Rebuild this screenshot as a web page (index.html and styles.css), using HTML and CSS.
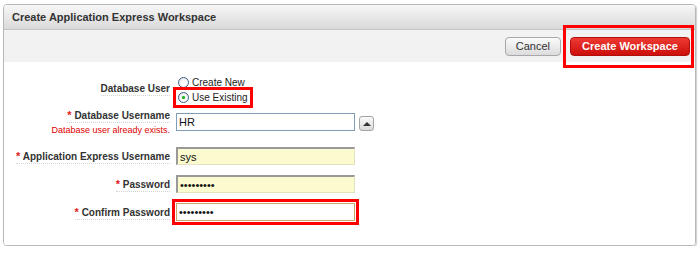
FILE: index.html
```html
<!DOCTYPE html>
<html>
<head>
<meta name="viewport" content="width=device-width, initial-scale=1.0">
<link rel="stylesheet" href="styles.css">
</head>
<body>
<div class="panel">
	<div class="panel-head">Create Application Express Workspace</div>
	<div class="toolbar">
		<button class="btn">Cancel</button>
		<span class="mark-btn"><button class="btn btn-hot">Create Workspace</button></span>
	</div>
	<div class="form">
		<div class="row row-radio">
			<div class="lbl lbl-up"><span>Database User</span></div>
			<div class="radios">
				<label class="opt"><span class="radio"></span>Create New</label>
				<label class="opt opt-marked"><span class="radio on"></span>Use Existing</label>
			</div>
		</div>
		<div class="row row-err">
			<div class="lbl">
				<span><b class="req">*</b> Database Username</span>
				<div class="err">Database user already exists.</div>
			</div>
			<input class="txt" type="text" value="HR">
			<span class="pick"><i></i></span>
		</div>
		<div class="row">
			<div class="lbl"><span><b class="req">*</b> Application Express Username</span></div>
			<input class="txt txt-auto" type="text" value="sys">
		</div>
		<div class="row">
			<div class="lbl"><span><b class="req">*</b> Password</span></div>
			<input class="txt txt-auto" type="password" value="syspasswd">
		</div>
		<div class="row">
			<div class="lbl"><span><b class="req">*</b> Confirm Password</span></div>
			<input class="txt txt-focus" type="password" value="syspasswd">
		</div>
	</div>
</div>
</body>
</html>
```

FILE: styles.css
```css
* {
	box-sizing: border-box;
}
body {
	margin: 0;
	background: #fff;
	font-family: "Liberation Sans", Arial, sans-serif;
	color: #333;
}
.panel {
	margin: 4px 4px 0 3px;
	border: 1px solid #b8b8b8;
	border-radius: 4px;
	box-shadow: 1px 1px 1px #d0d0d0;
}
.panel-head {
	height: 25px;
	line-height: 24px;
	padding-left: 8px;
	font-size: 11px;
	font-weight: bold;
	color: #333;
	background: linear-gradient(#f7f7f7, #d9d9d9);
	border-bottom: 1px solid #c4c4c4;
	border-radius: 3px 3px 0 0;
}
.toolbar {
	height: 32px;
	background: #f2f2f2;
	display: flex;
	align-items: center;
	justify-content: flex-end;
	gap: 9px;
	padding-right: 5px;
}
.btn {
	height: 19px;
	padding: 0 10px;
	font-family: "Liberation Sans", Arial, sans-serif;
	font-size: 11px;
	color: #333;
	background: linear-gradient(#fbfbfb, #dcdcdc);
	border: 1px solid #a8a8a8;
	border-radius: 4px;
}
.btn-hot {
	width: 120px;
	padding: 0;
	font-weight: bold;
	color: #fff;
	background: linear-gradient(#ee3a33, #cc0f0a);
	border-color: #b0100c;
}
.mark-btn {
	position: relative;
	display: inline-flex;
}
.mark-btn::after {
	content: "";
	position: absolute;
	top: -12px;
	bottom: -12px;
	left: -7px;
	right: -4px;
	border: 3px solid #f00;
}
.form {
	background: #fff;
	padding: 13px 0 19px;
	border-radius: 0 0 3px 3px;
}
.row {
	display: flex;
	align-items: center;
	gap: 6px;
	height: 28px;
}
.row-radio {
	height: 30px;
	margin-bottom: 3px;
}
.row-err {
	margin-bottom: 6px;
}
.lbl {
	width: 166px;
	text-align: right;
	font-size: 10px;
	font-weight: bold;
	line-height: 13px;
}
.lbl-up {
	padding-bottom: 3px;
}
.lbl span {
	border-bottom: 1px dotted #d4d4d4;
	padding-bottom: 1px;
}
.req {
	color: #e02020;
	font-size: 11px;
}
.err {
	font-weight: normal;
	font-size: 9px;
	line-height: 11px;
	margin-top: 3px;
	color: #e00000;
}
.radios {
	display: flex;
	flex-direction: column;
	align-items: flex-start;
}
.opt {
	display: inline-flex;
	align-items: center;
	height: 15px;
	padding-right: 2px;
	font-size: 10px;
	color: #222;
}
.opt-marked {
	outline: 3px solid #f00;
}
.radio {
	width: 11px;
	height: 11px;
	margin: 0 3px 0 2px;
	border: 1px solid #3b5f86;
	border-radius: 50%;
	background: radial-gradient(circle at 60% 65%, #fff 30%, #dcdcdc 100%);
	display: inline-flex;
	align-items: center;
	justify-content: center;
}
.radio.on::before {
	content: "";
	width: 3px;
	height: 3px;
	border-radius: 50%;
	background: #21b021;
	box-shadow: 0 0 1px #40d040;
}
.txt {
	width: 179px;
	height: 18px;
	padding: 0 2px;
	font-family: "Liberation Sans", Arial, sans-serif;
	font-size: 11px;
	color: #111;
	background: #fff;
	border: 1px solid #7f9db9;
}
.txt-auto {
	background: #fbfbcf;
	border-color: #999 #e2e2c0 #e2e2c0 #999;
	border-width: 2px 1px 1px 2px;
}
.txt-focus {
	border-color: #c9a66a;
	outline: 3px solid #f00;
	outline-offset: 1px;
}
.pick {
	width: 15px;
	height: 15px;
	margin: 3px 0 0 -2px;
	border: 1px solid #a5a5a5;
	border-radius: 3px;
	background: linear-gradient(#fafafa, #dadada);
	display: inline-flex;
	align-items: center;
	justify-content: center;
}
.pick i {
	width: 0;
	height: 0;
	border-left: 4px solid transparent;
	border-right: 4px solid transparent;
	border-bottom: 4px solid #333;
}
```
